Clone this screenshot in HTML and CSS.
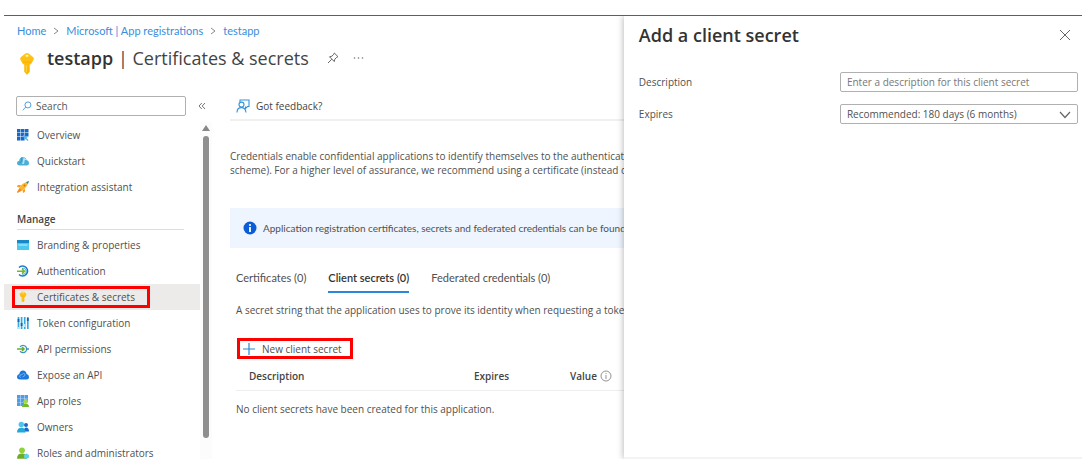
FILE: index.html
```html
<!DOCTYPE html>
<html lang="en">
<head>
<meta charset="utf-8">
<title>testapp | Certificates &amp; secrets</title>
<link rel="stylesheet" href="styles.css">
</head>
<body>
<svg width="0" height="0" class="defs" aria-hidden="true">
  <linearGradient id="gold" x1="0" y1="0" x2="0" y2="1"><stop offset="0" stop-color="#ffc61a"/><stop offset="1" stop-color="#fbb400"/></linearGradient>
  <symbol id="key" viewBox="0 0 18 26">
    <path fill="url(#gold)" d="M6.500 2.200Q9 .2 11.500 2.200L15.800 5.600Q17 7 16 8.600L13.800 12.500Q13.200 13.500 12 13.500V21.500L9 24.600L6 21.500V13.500Q4.800 13.500 4.200 12.500L2 8.600Q1 7 2.200 5.600Z"/>
    <ellipse cx="9" cy="4" rx="1.700" ry="1.100" fill="#fff4c4"/>
    <path d="M5 10.800H13" stroke="#f5a800" stroke-width=".8"/>
    <path d="M8.300 14V22" stroke="#ffdc62" stroke-width=".8"/>
  </symbol>
</svg>
<div class="portal">
  <main class="blade">
    <header class="head">
      <nav class="crumbs" aria-label="Breadcrumb">
        <a href="#">Home</a><svg viewBox="0 0 6 8"><path d="M1 1L5 4L1 7"/></svg><a href="#">Microsoft | App registrations</a><svg viewBox="0 0 6 8"><path d="M1 1L5 4L1 7"/></svg><a href="#">testapp</a>
      </nav>
      <div class="title">
        <svg class="title-key"><use href="#key"/></svg>
        <h1><b>testapp</b> | Certificates &amp; secrets</h1>
        <button class="plain" aria-label="Pin"><svg class="pin" viewBox="0 0 12 12" fill="none" stroke="#666"><path d="M7.300 1L11 4.700L9.800 5.200L7.800 7.200L7.300 9.600L2.500 4.800L4.900 4.200L6.800 2.300ZM4.800 7.200L1 11"/></svg></button>
        <button class="plain" aria-label="More"><svg class="more" viewBox="0 0 11 4" fill="#777"><circle cx="1.500" cy="2" r=".8"/><circle cx="5.500" cy="2" r=".8"/><circle cx="9.500" cy="2" r=".8"/></svg></button>
      </div>
    </header>
    <div class="columns">
      <aside class="side">
        <div class="search-row">
          <label class="search"><svg viewBox="0 0 11 11" fill="none" stroke="#3b96dc"><circle cx="6.500" cy="4.300" r="3.300"/><path d="M4.200 6.600L.800 10"/></svg><input type="text" placeholder="Search" aria-label="Search"></label>
          <button class="plain" aria-label="Collapse menu"><svg class="collapse" viewBox="0 0 8 8" fill="none" stroke="#777"><path d="M3.800 1L1 4L3.800 7M7 1L4.200 4L7 7"/></svg></button>
        </div>
        <div class="menu-row">
          <nav class="menu" aria-label="Resource menu">
            <a href="#"><svg viewBox="0 0 12 12"><path fill="#1769c7" d="M0 0h3.500v3.500H0zM4 0h3.500v3.500H4zM8 0h3.500v3.500H8zM0 4h3.500v3.500H0zM4 4h3.500v3.500H4zM8 4h3.500v3.500H8zM0 8h3.500v3.500H0zM4 8h3.500v3.500H4z"/><path fill="#5eb1e8" d="M6 5.500L11 8L9.500 9L11.500 11L10.500 12L8.500 10L7.500 11.500Z"/></svg>Overview</a>
            <a href="#"><svg viewBox="0 0 12 12"><path fill="#4daed6" d="M3 10.500Q0 10.500 0 8Q0 6 2.200 5.700Q2.800 2 6 2Q8.800 2 9.500 5Q12 5.300 12 8Q12 10.500 9.500 10.500Z"/><path fill="#aee3f7" d="M6.800 1.800L9.500 5L7.800 5L7 9H5.200L6 5Z"/><path stroke="#2a93c4" stroke-width=".8" fill="none" d="M4.500 2.500V6.500L2.500 8"/></svg>Quickstart</a>
            <a href="#"><svg viewBox="0 0 12 12"><path fill="#ff9a1f" d="M4 4H.8L0 6L3 6.500ZM8 8V10.800L6 12L5.600 9Z"/><path fill="#fdb52b" d="M2.300 7.200Q5 2 10 1L11 2Q10 7 4.800 9.700Z"/><path fill="#1888a8" d="M9 1L12 0L11 3Z"/><circle cx="7.500" cy="4.500" r=".9" fill="#c8741c"/><path fill="#f58a16" d="M2.500 7L5 9.500L.5 12L0 11Z"/></svg>Integration assistant</a>
            <h2>Manage</h2>
            <a href="#"><svg viewBox="0 0 12 12"><path fill="#1688c6" d="M0 1h12v3H0z"/><path fill="#4bc8ed" d="M0 4h12v7H0z"/><path fill="#c5f3ff" d="M1.500 5.500h9v1h-9z"/></svg>Branding &amp; properties</a>
            <a href="#"><svg viewBox="0 0 12 12" fill="none"><path stroke="#1d76cb" stroke-width="1.600" d="M2 2.500A5 5 0 1 1 2 9.500"/><path stroke="#31a5dc" stroke-width="1" d="M5 3.500A3 3 0 1 1 5 9"/><path stroke="#76b82a" stroke-width="1.500" d="M0 6.200H7M5 3.800L7.500 6.200L5 8.600"/></svg>Authentication</a>
            <a href="#" class="current"><svg><use href="#key"/></svg>Certificates &amp; secrets</a>
            <a href="#"><svg viewBox="0 0 12 12"><path stroke="#39a7df" stroke-width="1.700" d="M1.500 0V12M4.600 0V12M7.700 0V12M10.800 0V12"/><path stroke="#1764ad" stroke-width="1.800" d="M1.500 2V5M4.600 6V9M10.800 1V4"/><path stroke="#b9eafa" stroke-width="1.700" d="M7.700 7V10M1.500 10V12"/></svg>Token configuration</a>
            <a href="#"><svg viewBox="0 0 12 12" fill="none"><path stroke="#3995c3" stroke-width="1.300" d="M3 3.800Q6 1 9 3.800M3 8.200Q6 11 9 8.200M9 3.800Q10.500 6 9 8.200"/><path stroke="#68ae2e" stroke-width="1.600" d="M0 6H7M5 4L7 6L5 8"/><path stroke="#2c83ae" stroke-width="1.300" d="M9.500 6H12"/></svg>API permissions</a>
            <a href="#"><svg viewBox="0 0 12 12"><path fill="#1e78dc" d="M3 10.500Q0 10.500 0 7.800Q0 5.500 2.300 5.100Q2.800 1.500 6 1.500Q9 1.500 9.600 5Q12 5.500 12 8Q12 10.500 9.500 10.500Z"/><path fill="none" stroke="#7cbcf8" stroke-width=".8" d="M4 8.500Q1.500 8 3 6Q5 6 6.500 4.500Q8.500 4.500 8 6.500L5.500 8"/></svg>Expose an API</a>
            <a href="#"><svg viewBox="0 0 12 12"><path fill="#4f9ce8" d="M0 0h3.400v3.400H0zM3.800 0h3.400v3.400h-3.400zM7.600 0h3.400v3.400h-3.400zM0 3.800h3.400v3.400H0zM3.800 3.800h3.400v3.400h-3.400zM7.600 3.800h3.400v3.400h-3.400zM0 7.600h3.400v3.400H0zM3.800 7.600h3.400v3.400h-3.400z"/><circle cx="8.700" cy="6.200" r="2.200" fill="#a0d94e"/><path fill="#74b928" d="M5 12Q5 8.500 8.500 8.500Q12 8.500 12 12Z"/></svg>App roles</a>
            <a href="#"><svg viewBox="0 0 12 12"><circle cx="9" cy="4" r="2" fill="#1769c7"/><path fill="#1769c7" d="M6.500 10.500Q7 6.300 9.500 6.500Q12 7 12 10.500Z"/><circle cx="4.300" cy="3.500" r="2.700" fill="#50c4e8"/><path fill="#23a7d9" d="M0 11.500Q0 6.800 4.300 6.800Q8.600 6.800 8.600 11.500Z"/></svg>Owners</a>
            <a href="#"><svg viewBox="0 0 12 12"><circle cx="5" cy="3.300" r="2.900" fill="#92d13e"/><path fill="#6eae25" d="M0 11.800Q0 6.600 5 6.600Q10 6.600 10 11.800Z"/><path fill="#5fd0ee" d="M9.500 6.500L12 8V10.500L9.500 12L7 10.500V8Z"/></svg>Roles and administrators</a>
          </nav>
          <div class="scroll" aria-hidden="true"><i class="arrow"></i><i class="thumb"></i></div>
        </div>
      </aside>
      <section class="content">
        <div class="toolbar"><button class="plain"><svg viewBox="0 0 14 14" fill="none" stroke="#3094dc" stroke-width="1.100"><path d="M4 3V1H13V7.500H11.500L9.500 9.500V7.500"/><circle cx="5.500" cy="5.600" r="2.500"/><path d="M1 13.500Q1 8.600 5.500 8.600Q9.500 8.600 10 13.500"/></svg>Got feedback?</button></div>
        <p class="intro">Credentials enable confidential applications to identify themselves to the authenticati<br>scheme). For a higher level of assurance, we recommend using a certificate (instead of</p>
        <div class="banner"><svg viewBox="0 0 14 14"><circle cx="7" cy="7" r="6.500" fill="#0b5cd5"/><circle cx="7" cy="4" r="1.100" fill="#fff"/><path stroke="#fff" stroke-width="1.800" d="M7 6V11"/></svg><span>Application registration certificates, secrets and federated credentials can be found in</span></div>
        <div class="tabs" role="tablist">
          <button role="tab">Certificates (0)</button>
          <button role="tab" aria-selected="true">Client secrets (0)</button>
          <button role="tab">Federated credentials (0)</button>
        </div>
        <p class="hint">A secret string that the application uses to prove its identity when requesting a toke</p>
        <button class="new-secret"><svg viewBox="0 0 12 12"><path stroke="#2688d2" stroke-width="1.200" d="M6 0V12M0 6H12"/></svg>New client secret</button>
        <table>
          <thead><tr><th class="c-desc">Description</th><th class="c-exp">Expires</th><th>Value <svg viewBox="0 0 12 12" fill="none" stroke="#777" stroke-width=".8"><circle cx="6" cy="6" r="5"/><path d="M6 5V9M6 3V4"/></svg></th></tr></thead>
          <tbody><tr><td colspan="3">No client secrets have been created for this application.</td></tr></tbody>
        </table>
      </section>
    </div>
  </main>
  <form class="drawer" aria-labelledby="drawer-title">
    <div class="drawer-head"><h2 id="drawer-title">Add a client secret</h2><button type="button" class="plain" aria-label="Close"><svg viewBox="0 0 12 12" stroke="#666"><path d="M1 1L11 11M11 1L1 11"/></svg></button></div>
    <div class="field"><label for="desc">Description</label><input id="desc" type="text" placeholder="Enter a description for this client secret"></div>
    <div class="field"><label for="exp">Expires</label><div class="select"><select id="exp"><option>Recommended: 180 days (6 months)</option></select><svg viewBox="0 0 12 8" fill="none" stroke="#666" stroke-width="1.200"><path d="M1 1L6 6.500L11 1"/></svg></div></div>
  </form>
</div>
</body>
</html>
```
FILE: styles.css
```css
* { box-sizing: border-box; }
body { margin: 0; background: #fff; color: #505050; font: 10px/14px "Open Sans", "Noto Sans", sans-serif; }
h1, h2, p { margin: 0; }
svg { display: block; flex: none; }
a { color: inherit; text-decoration: none; }
button, input, select { font: inherit; color: inherit; }
button { margin: 0; padding: 0; border: 0; background: none; }
.defs { position: absolute; }
.plain { display: flex; align-items: center; }

.portal { display: grid; grid-template-columns: minmax(0, 1fr) 42.5%; margin: 15px 8px 0 4px; border-top: 1px solid #0078d4; height: calc(100vh - 15px); overflow: hidden; }
.blade { overflow: hidden; }

.head { padding: 8px 0 0 13px; }
.crumbs { display: flex; align-items: center; gap: 7px; color: #3a8ddb; font: 11px/14px Lato, "Noto Sans", sans-serif; }
.crumbs svg { width: 6px; height: 8px; fill: none; stroke: #888; }
.title { display: flex; align-items: center; margin-top: 6px; height: 28px; }
.title-key { width: 20px; height: 24px; margin-top: 12px; }
.title h1 { margin: 0 18px 0 10px; font-size: 18px; line-height: 24px; font-weight: 400; color: #444; white-space: nowrap; }
.title b { font-weight: 600; color: #333; }
.pin { width: 12px; height: 12px; margin-right: 14px; }
.more { width: 11px; height: 4px; }

.columns { display: grid; grid-template-columns: 208px minmax(0, 1fr); margin-top: 24px; }
.search-row { display: flex; align-items: center; gap: 12px; padding-left: 12px; }
.search { display: flex; align-items: center; gap: 4px; width: 170px; height: 20px; padding-left: 5px; border: 1px solid #b0b0b0; border-radius: 2px; }
.search svg { width: 10px; height: 10px; }
.search input { width: 140px; padding: 0; border: 0; outline: 0; background: none; }
::placeholder { color: #777; opacity: 1; }
.search input::placeholder { color: #555; }
.collapse { width: 8px; height: 8px; }
.menu-row { display: flex; margin-top: 6px; }
.menu { flex: 1; }
.menu a { display: flex; align-items: center; gap: 8px; height: 26px; padding-left: 13px; }
.menu a svg { width: 12px; height: 12px; }
.menu h2 { margin: 10px 16px 2px 13px; padding-bottom: 1px; border-bottom: 1px solid #ddd; font-size: 10px; line-height: 18px; font-weight: 600; color: #444; }
.menu .current { position: relative; background: #edebe9; }
.menu .current::after { content: ""; position: absolute; inset: 2px 50px 2px 8px; border: 3px solid #f00; }
.scroll { width: 12px; padding-top: 3px; background: #fcfcfc; }
.scroll i { display: block; margin: 0 auto; }
.arrow { width: 0; border: 4px solid transparent; border-top: 0; border-bottom: 6px solid #888; }
.scroll .thumb { width: 6px; height: 302px; margin-top: 5px; border-radius: 3px; background: #8f8f8f; }

.content { padding-left: 18px; white-space: nowrap; }
.toolbar { height: 25px; border-bottom: 2px solid #f0f0f0; }
.toolbar button { gap: 6px; height: 20px; padding-left: 6px; color: #444; }
.toolbar svg { width: 14px; height: 14px; }
.intro { margin-top: 28px; }
.banner { display: flex; align-items: center; gap: 6px; height: 40px; margin-top: 31px; padding-left: 13px; background: #eff5fe; font-family: Lato, "Noto Sans", sans-serif; }
.banner svg { width: 14px; height: 14px; }
.tabs { display: flex; gap: 22px; margin: 20px 0 0 6px; font: 11px/14px Lato, "Noto Sans", sans-serif; }
.tabs button { height: 25px; padding-bottom: 3px; border-bottom: 2px solid transparent; }
.tabs [aria-selected] { border-color: #2b88d8; font-weight: 600; color: #333; }
.hint { margin: 10px 0 0 6px; }
.new-secret { display: flex; align-items: center; gap: 7px; height: 21px; margin: 21px 0 0 7px; padding: 0 8px 0 3px; border: 3px solid #f00; }
.new-secret svg { width: 12px; height: 12px; }
table { width: calc(100% - 6px); margin-left: 6px; border-collapse: collapse; table-layout: fixed; }
th { height: 31px; padding: 4px 0 0; border-bottom: 1px solid #eee; text-align: left; font-weight: 600; color: #444; }
th svg { display: inline-block; width: 12px; height: 12px; vertical-align: -2px; }
td { height: 38px; padding: 0; }
.c-desc { width: 238px; padding-left: 13px; }
.c-exp { width: 96px; }

.drawer { position: relative; padding: 6px 4px 0 15px; background: #fff; border-bottom: 2px solid #f3f3f3; box-shadow: -1px 0 6px rgba(0, 0, 0, .25); }
.drawer-head { display: flex; justify-content: space-between; align-items: center; padding-right: 7px; margin-bottom: 24px; }
.drawer-head h2 { font-size: 18px; line-height: 26px; font-weight: 600; color: #333; }
.drawer-head svg { width: 12px; height: 12px; }
.field { display: grid; grid-template-columns: minmax(0, 201fr) minmax(0, 238fr); align-items: center; height: 20px; margin-bottom: 12px; }
.field input, .field select { width: 100%; height: 20px; padding: 0 6px; border: 1px solid #b0b0b0; border-radius: 2px; background: #fff; outline: 0; }
.select { position: relative; }
.select select { appearance: none; }
.select svg { position: absolute; right: 7px; top: 7px; width: 12px; height: 8px; pointer-events: none; }
```
